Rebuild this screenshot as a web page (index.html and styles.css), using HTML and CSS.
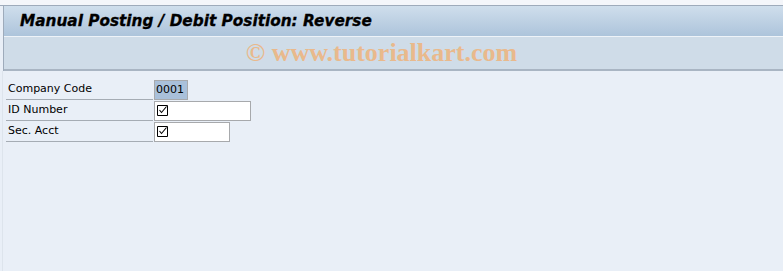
FILE: index.html
```html
<!DOCTYPE html>
<html lang="en">
<head>
  <meta charset="UTF-8">
  <title>Manual Posting / Debit Position: Reverse</title>
  <link rel="stylesheet" href="styles.css">
</head>
<body>
  <div class="top-strip"></div>
  <div class="window">
    <header class="title-bar">
      <h1>Manual Posting / Debit Position: Reverse</h1>
    </header>
    <div class="toolbar">
      <span class="watermark">&copy; www.tutorialkart.com</span>
    </div>
  </div>

  <main class="content">
    <!-- Selection fields -->
    <div class="form-row">
      <label class="field-label">Company Code</label>
      <span class="field field-short selected">0001</span>
    </div>
    <div class="form-row">
      <label class="field-label">ID Number</label>
      <span class="field field-long">
        <svg class="check" width="11" height="11" viewBox="0 0 11 11"><path d="M0.5 0.5h10v10h-10z" fill="none" stroke="#000"/><path d="M2.5 5l2 2.5 5-6" fill="none" stroke="#000" stroke-width="1.1"/></svg>
      </span>
    </div>
    <div class="form-row">
      <label class="field-label">Sec. Acct</label>
      <span class="field field-mid">
        <svg class="check" width="11" height="11" viewBox="0 0 11 11"><path d="M0.5 0.5h10v10h-10z" fill="none" stroke="#000"/><path d="M2.5 5l2 2.5 5-6" fill="none" stroke="#000" stroke-width="1.1"/></svg>
      </span>
    </div>
  </main>
</body>
</html>
```

FILE: styles.css
```css
/* General Styles */
body {
  margin: 0;
  padding: 0;
  background-color: #e9eff7;
  font-family: "DejaVu Sans", Tahoma, sans-serif;
  color: #000;
  width: 783px;
  height: 271px;
  overflow: hidden;
}

.top-strip {
  height: 5px;
  background-color: #f4f6fa;
  border-bottom: 1px solid #9eabbb;
}

.window {
  margin-left: 3px;
  border-left: 1px solid #9eabbb;
}

.title-bar {
  height: 30px;
  background: linear-gradient(to bottom, #cfdeec, #adc4db);
  border-bottom: 1px solid #eef3f8;
  display: flex;
  align-items: center;
  padding-left: 16px;
}

.title-bar h1 {
  margin: 0;
  font-size: 15.3px;
  font-weight: bold;
  font-style: italic;
  color: #000;
  -webkit-text-stroke: 0.3px #000;
}

.toolbar {
  height: 32px;
  background-color: #cfdce8;
  border-bottom: 2px solid #a9b5c3;
  display: flex;
  align-items: center;
  justify-content: center;
  padding-right: 24px;
}

.watermark {
  font-family: "Liberation Serif", serif;
  font-weight: bold;
  font-size: 26px;
  color: #e9b98c;
}

.content {
  margin-left: 2px;
  border-left: 1px solid #dde4ec;
  height: 202px;
  padding-top: 8px;
  padding-left: 3px;
}

.form-row {
  display: flex;
  align-items: center;
  height: 21px;
}

.field-label {
  width: 145px;
  height: 20px;
  line-height: 20px;
  padding-left: 2px;
  font-size: 11px;
  border-bottom: 1px solid #a5acb4;
}

.field {
  box-sizing: border-box;
  display: flex;
  align-items: center;
  height: 20px;
  margin-left: 1px;
  border: 1px solid #a7a9ac;
  background-color: #fff;
  font-size: 11px;
  padding-left: 2px;
}

.field-short {
  width: 34px;
}

.field-long {
  width: 97px;
}

.field-mid {
  width: 76px;
}

.selected {
  background-color: #a9c0da;
  padding-left: 1px;
}

.check {
  display: block;
}
```
